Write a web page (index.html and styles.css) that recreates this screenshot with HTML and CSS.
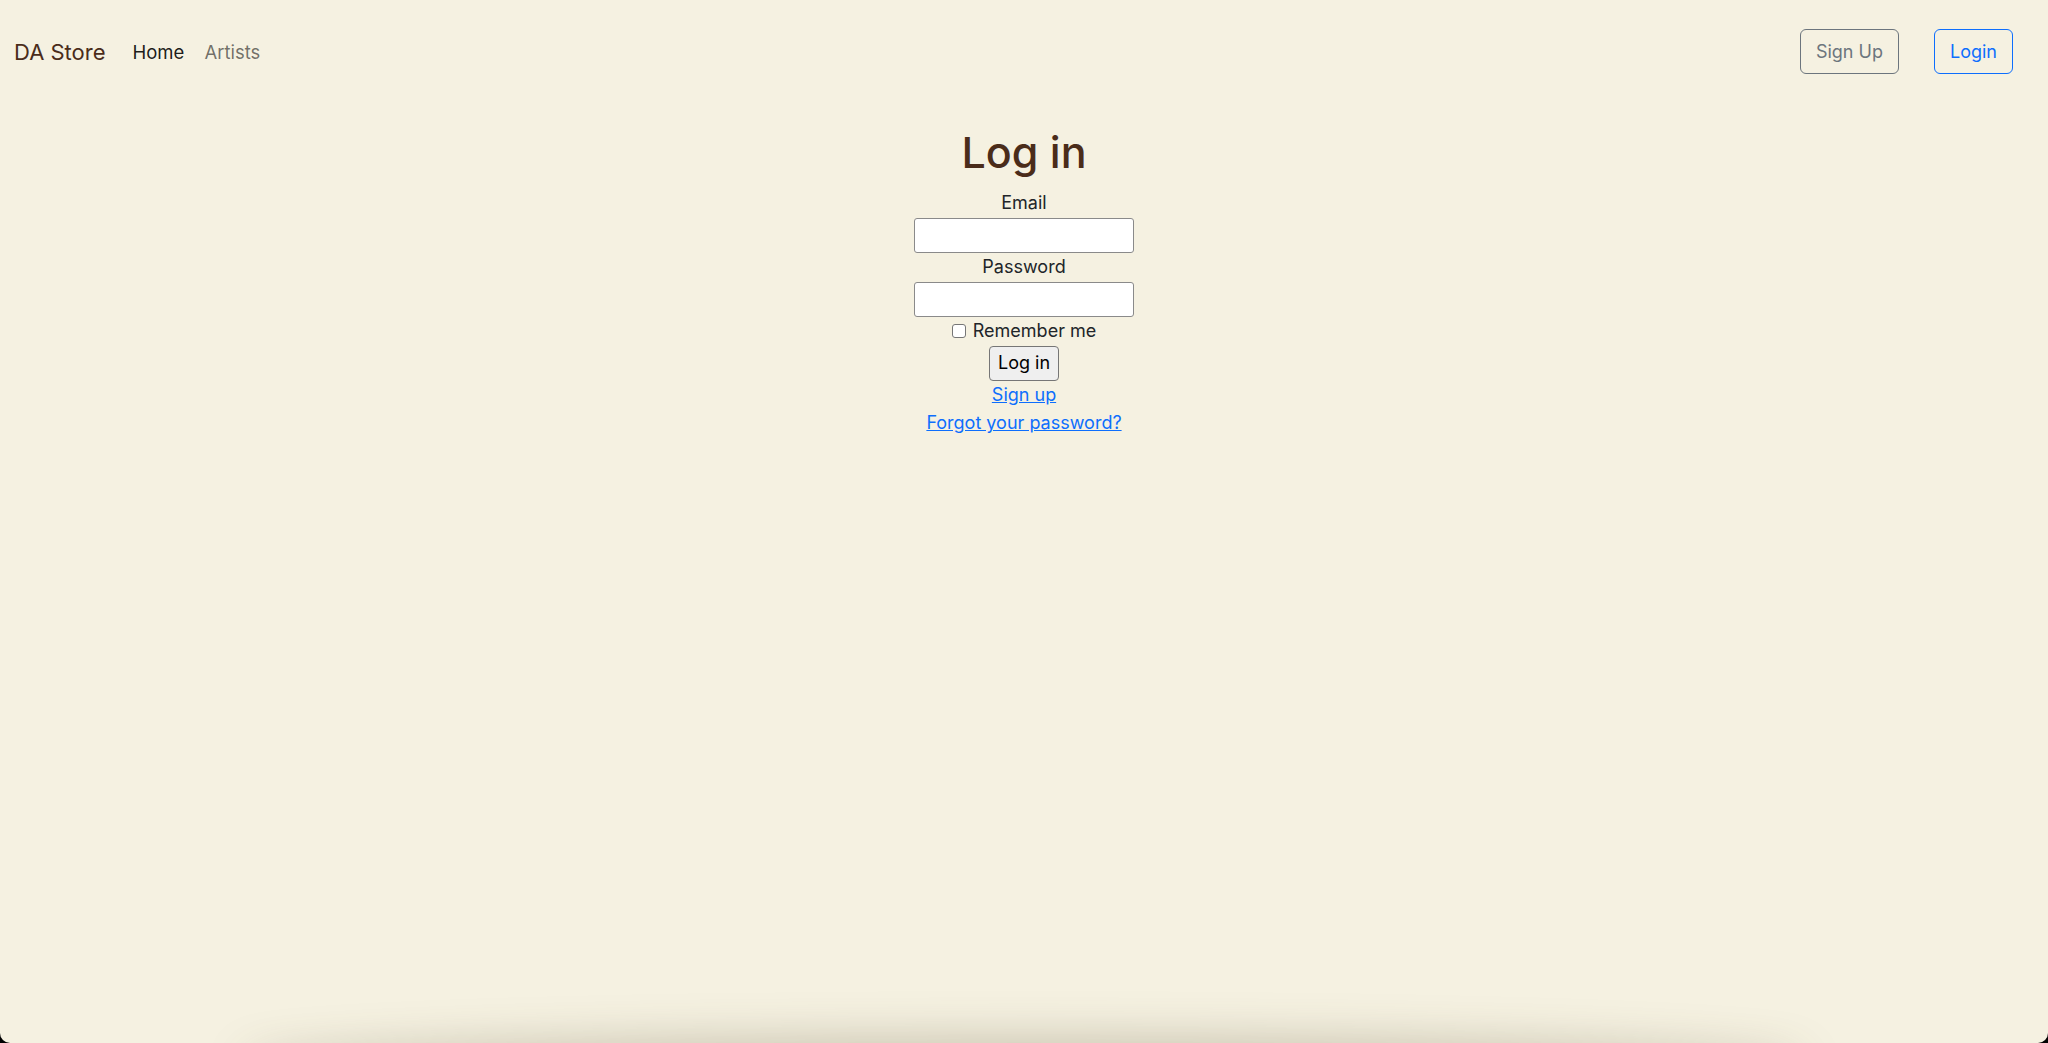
FILE: index.html
```html
<!DOCTYPE html>
<html lang="en">
<head>
<meta charset="utf-8">
<title>DA Store - Log in</title>
<link rel="stylesheet" href="styles.css">
</head>
<body>
<div class="page">
  <nav class="navbar">
    <a class="brand" href="#">DA Store</a>
    <ul class="nav-links">
      <li><a class="nav-link active" href="#">Home</a></li>
      <li><a class="nav-link" href="#">Artists</a></li>
    </ul>
    <div class="nav-actions">
      <a class="btn btn-outline-secondary" href="#">Sign Up</a>
      <a class="btn btn-outline-primary" href="#">Login</a>
    </div>
  </nav>

  <main class="content">
    <h1 class="title">Log in</h1>
    <form class="login-form">
      <div class="field">
        <label class="field-label" for="email">Email</label>
        <input class="text-input" id="email" type="email">
      </div>
      <div class="field">
        <label class="field-label" for="password">Password</label>
        <input class="text-input" id="password" type="password">
      </div>
      <div class="field remember">
        <input class="check" id="remember" type="checkbox">
        <label for="remember">Remember me</label>
      </div>
      <div class="actions">
        <button class="submit" type="button">Log in</button>
      </div>
    </form>
    <div class="links">
      <a href="#">Sign up</a>
      <a href="#">Forgot your password?</a>
    </div>
  </main>
  <div class="dock-shadow"></div>
</div>
</body>
</html>
```
FILE: styles.css
```css
html {
  background: #000;
}
body {
  margin: 0;
  font-family: Inter, "Noto Sans", sans-serif;
  color: #212529;
}
.page {
  position: relative;
  height: 1043px;
  background: #f5f1e1;
  border-radius: 0 0 10px 10px;
  overflow: hidden;
  box-sizing: border-box;
}
.navbar {
  display: flex;
  align-items: center;
  padding: 29px 35px 0 14px;
  height: 45px;
}
.brand {
  font-size: 22px;
  color: #4a2c1a;
  text-decoration: none;
  margin-right: 17px;
  line-height: 1;
}
.nav-links {
  display: flex;
  list-style: none;
  margin: 0;
  padding: 0;
}
.nav-link {
  display: block;
  padding: 0 10px;
  font-size: 18.5px;
  color: rgba(0, 0, 0, 0.55);
  text-decoration: none;
}
.nav-link.active {
  color: rgba(0, 0, 0, 0.9);
}
.nav-actions {
  margin-left: auto;
  display: flex;
  gap: 35px;
}
.btn {
  display: inline-block;
  box-sizing: border-box;
  height: 45px;
  line-height: 43px;
  padding: 0 15px;
  font-size: 18px;
  border: 1px solid;
  border-radius: 6px;
  text-decoration: none;
}
.btn-outline-secondary {
  color: #6c757d;
  border-color: #6c757d;
}
.btn-outline-primary {
  color: #0d6efd;
  border-color: #0d6efd;
}
.content {
  text-align: center;
  font-size: 18px;
  line-height: 28.8px;
  color: #212529;
}
.title {
  margin: 51px 0 10px;
  font-size: 43px;
  font-weight: 500;
  line-height: 54px;
  color: #4a2c1a;
}
.login-form {
  margin: 0;
}
.field-label {
  display: block;
}
.text-input {
  display: block;
  margin: 0 auto;
  box-sizing: border-box;
  width: 220px;
  height: 35px;
  border: 1px solid #8a8a8a;
  border-radius: 3px;
  background: #fff;
  font: inherit;
}
.remember {
  display: flex;
  justify-content: center;
  align-items: center;
  gap: 7px;
  height: 29px;
}
.check {
  appearance: none;
  -webkit-appearance: none;
  margin: 0;
  width: 14px;
  height: 14px;
  box-sizing: border-box;
  border: 1px solid #767676;
  border-radius: 3px;
  background: #fff;
}
.actions {
  display: flex;
  justify-content: center;
}
.submit {
  box-sizing: border-box;
  height: 35px;
  padding: 0 8px;
  font: inherit;
  font-size: 18px;
  color: #000;
  background: #efefef;
  border: 1px solid #767676;
  border-radius: 4px;
}
.links {
  display: flex;
  flex-direction: column;
  align-items: center;
}
.links a {
  color: #0d6efd;
  text-decoration: underline;
}
.dock-shadow {
  position: absolute;
  left: 260px;
  right: 260px;
  top: 1060px;
  height: 20px;
  box-shadow: 0 -4px 45px 18px rgba(90, 80, 50, 0.28);
  border-radius: 50%;
}
```
